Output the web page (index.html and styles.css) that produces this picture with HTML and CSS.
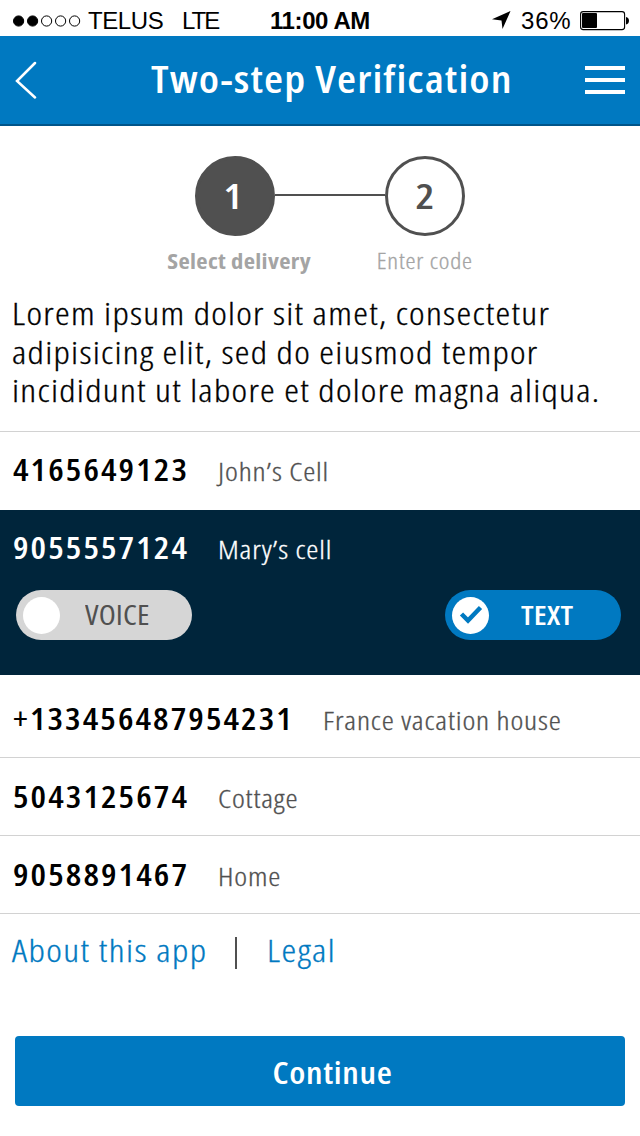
FILE: index.html
```html
<!DOCTYPE html>
<html lang="en">
<head>
<meta charset="utf-8">
<title>Two-step Verification</title>
<link rel="stylesheet" href="styles.css">
</head>
<body>
<div class="status">
  <svg class="signal" width="68" height="12" viewBox="0 0 68 12"><g stroke="#000"><circle cx="5.6" cy="6" r="5.1"/><circle cx="19.6" cy="6" r="5.1"/><g fill="none"><circle cx="33.6" cy="6" r="5.1"/><circle cx="47.6" cy="6" r="5.1"/><circle cx="61.6" cy="6" r="5.1"/></g></g></svg>
  <span class="carrier">TELUS</span>
  <span class="network">LTE</span>
  <span class="time">11:00 AM</span>
  <svg class="arrow" width="19" height="19" viewBox="0 0 19 19"><path d="M18.500 0 10.500 18 9.500 9.500 0 8.300Z"/></svg>
  <span class="percent">36%</span>
  <svg class="battery" width="50" height="20" viewBox="0 0 50 20"><rect x=".6" y=".6" width="44" height="18" rx="2.6" fill="none" stroke="#000" stroke-width="1.1"/><rect x="2" y="2" width="15" height="15" rx="1"/><path d="M46 6c4 .5 4 7 0 7.500Z"/></svg>
</div>
<header class="header">
  <svg class="back" width="22" height="38" viewBox="0 0 22 38"><path d="M20 2 2 20 20 36.500" fill="none" stroke="#fff" stroke-width="2.500" stroke-linecap="round"/></svg>
  <h1 class="title">Two-step Verification</h1>
  <svg class="menu" width="40" height="28" viewBox="0 0 40 28"><path d="M0 0h40v4H0zM0 12h40v4H0zM0 24h40v4H0z" fill="#fff"/></svg>
</header>
<main>
  <div class="steps">
    <div class="step step-active"><div class="circle"><span class="digit">1</span></div><div class="step-label">Select delivery</div></div>
    <div class="connector"></div>
    <div class="step"><div class="circle"><span class="digit">2</span></div><div class="step-label">Enter code</div></div>
  </div>
  <p class="intro">Lorem ipsum dolor sit amet, consectetur<br>adipisicing elit, sed do eiusmod tempor<br>incididunt ut labore et dolore magna aliqua.</p>
  <div class="list">
    <div class="row"><span class="number">4165649123</span><span class="name">John’s Cell</span></div>
    <div class="selected">
      <div class="row"><span class="number">9055557124</span><span class="name">Mary’s cell</span></div>
      <div class="toggles">
        <div class="toggle"><span class="knob"></span><span class="toggle-text">VOICE</span></div>
        <div class="toggle toggle-on"><span class="knob"><svg width="24" height="20" viewBox="0 0 24 20"><path d="M2.500 9 9 15.500 21.500 2.500" fill="none" stroke="#0079c1" stroke-width="4.500"/></svg></span><span class="toggle-text">TEXT</span></div>
      </div>
    </div>
    <div class="row row-france"><span class="number long"><span class="plus">+</span>133456487954231</span><span class="name">France vacation house</span></div>
    <div class="row row-low"><span class="number">5043125674</span><span class="name">Cottage</span></div>
    <div class="row row-low"><span class="number">9058891467</span><span class="name">Home</span></div>
  </div>
  <nav class="links"><a class="about">About this app</a><span class="divider"></span><a class="legal">Legal</a></nav>
  <button class="continue"><span class="continue-text">Continue</span></button>
</main>
</body>
</html>
```

FILE: styles.css
```css
* { box-sizing: border-box; }
body { margin: 0; width: 640px; height: 1136px; background: #fff; color: #000; font-family: "Open Sans", "Noto Sans", sans-serif; font-stretch: 75%; overflow: hidden; }
svg { display: block; flex: none; }
.status { height: 36px; display: flex; align-items: center; padding: 5px 10px 0 13px; font: 24px/32px "Liberation Sans", sans-serif; white-space: nowrap; }
.status span { flex: none; }
.carrier { width: 101px; padding-left: 7px; letter-spacing: -.4px; }
.network { width: 88px; letter-spacing: -2px; }
.time { width: 222px; font-weight: bold; letter-spacing: -.4px; }
.arrow { margin-right: 10px; }
.percent { width: 59px; letter-spacing: .8px; }
.header { height: 90px; background: #0079c1; border-bottom: 2px solid #00558a; display: flex; align-items: center; padding: 0 15px; }
.title { margin: -5px 0 0 114px; color: #fff; font-size: 38px; line-height: 50px; font-weight: 600; letter-spacing: .95px; white-space: nowrap; transform: scaleX(1.15); transform-origin: left; }
.menu { margin-left: auto; }
.steps { display: flex; justify-content: center; padding: 30px 0 0 20px; height: 164px; }
.step { width: 80px; display: flex; flex-direction: column; align-items: center; color: #a4a4a4; }
.circle { width: 80px; height: 80px; border: 3px solid #505050; border-radius: 50%; color: #505050; font-size: 35px; line-height: 74px; font-weight: 600; text-align: center; }
.digit { display: block; transform: scaleX(1.2); }
.step-active .circle { background: #505050; color: #fff; padding-right: 4px; }
.step-label { margin-top: 9px; font-size: 22px; line-height: 30px; white-space: nowrap; font-weight: 300; letter-spacing: .7px; -webkit-text-stroke: .3px; transform: scaleX(1.15); }
.step-active .step-label { font-weight: 700; letter-spacing: .3px; margin-left: 8px; -webkit-text-stroke: 0; transform: scaleX(1.12); }
.connector { width: 110px; height: 2px; margin-top: 38px; background: #505050; }
.intro { margin: 0; width: 510px; height: 141px; padding: 4px 0 0 10px; font-size: 31px; line-height: 38.500px; font-weight: 300; letter-spacing: 1.080px; -webkit-text-stroke: .3px; white-space: nowrap; transform: scaleX(1.2); transform-origin: left; }
.row { height: 78px; border-top: 1px solid #d2d2d2; display: flex; align-items: baseline; padding: 16px 13px 0; gap: 31px; white-space: nowrap; line-height: 42px; }
.row-low { padding-top: 17px; }
.list { border-bottom: 1px solid #d2d2d2; }
.number { width: 174px; font-size: 31px; font-weight: 600; letter-spacing: 1.850px; transform: scaleX(1.12); transform-origin: left; }
.plus { font-weight: 400; }
.long { width: 279px; }
.name { font-size: 26px; color: #505050; font-weight: 300; letter-spacing: .7px; -webkit-text-stroke: .3px; transform: scaleX(1.18); transform-origin: left; }
.selected { height: 165px; margin-top: 1px; background: #00253b; color: #fff; }
.selected .row { height: 80px; border: 0; }
.selected .name { color: #fff; }
.row-france { border: 0; height: 82px; padding-top: 22px; }
.toggles { display: flex; justify-content: space-between; padding: 0 19px 0 16px; }
.toggle { width: 176px; height: 50px; border-radius: 25px; background: #d6d6d6; color: #505050; display: flex; align-items: center; padding-left: 7px; font-size: 27px; line-height: 48px; }
.toggle-on { background: #0079c1; color: #fff; font-weight: 600; }
.knob { width: 37px; height: 37px; border-radius: 50%; background: #fff; display: flex; align-items: center; justify-content: center; }
.toggle-text { margin-left: 25px; letter-spacing: .1px; transform: scaleX(1.16); transform-origin: left; }
.toggle-on .toggle-text { margin-left: 32px; }
.links { height: 122px; display: flex; align-items: flex-start; padding: 15px 12px; color: #0079c1; font-size: 31px; line-height: 42px; font-weight: 300; letter-spacing: 1.2px; -webkit-text-stroke: .3px; white-space: nowrap; }
.about, .legal { transform: scaleX(1.2); transform-origin: left; }
.about { width: 223px; }
.divider { width: 2px; height: 32px; margin-top: 8px; background: #505050; }
.legal { margin-left: 30px; }
.continue { display: block; width: 610px; height: 70px; margin: 0 15px; border: 0; border-radius: 4px; background: #0079c1; color: #fff; font: 600 31px/72px "Open Sans", sans-serif; font-stretch: 75%; letter-spacing: .6px; padding: 0 0 0 25px; }
.continue-text { display: block; transform: scaleX(1.12); }
```
